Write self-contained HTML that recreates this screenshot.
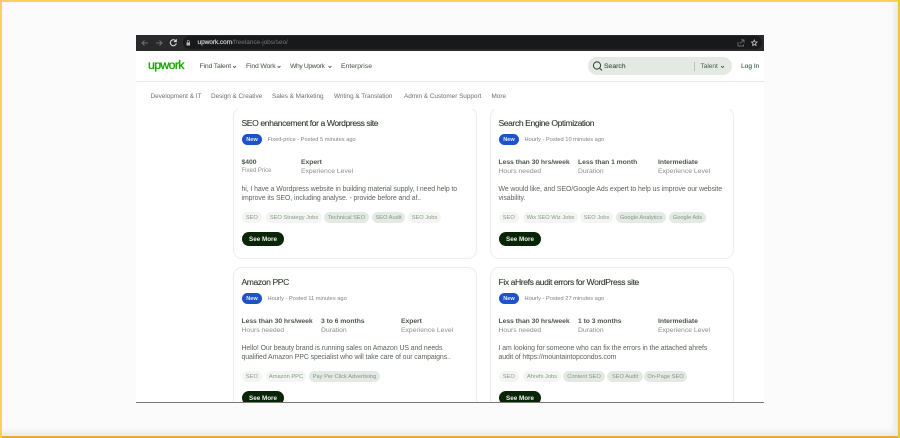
<!DOCTYPE html>
<html lang="en"><head><meta charset="utf-8"><title>Upwork</title>
<style>
html,body{margin:0;padding:0;background:#fff}
#p{position:relative;width:900px;height:438px;overflow:hidden;background:#fbfbfb;font-family:"Liberation Sans",sans-serif;box-sizing:border-box}
#sh{position:absolute;left:2px;top:2px;width:896px;height:434px;box-shadow:inset -4px -4px 6px rgba(0,0,0,.07)}
#b{position:absolute;left:0;top:0;width:900px;height:438px;filter:blur(.3px)}
#p span,#p b,#p i{position:absolute;white-space:nowrap;font-style:normal}
.fr{position:absolute;background:#f8d05a}
.t{font-size:8.6px;line-height:12px;color:#2b3a2b;letter-spacing:-.42px;-webkit-text-stroke:.1px #2b3a2b}
.nw{width:20px;height:11px;border-radius:6px;background:#1d52c9;color:#e8eeff;font-size:5.6px;line-height:12px;text-align:center;font-weight:bold}
.m{font-size:5.7px;line-height:8px;color:#7f847f}
.h{font-size:6.8px;line-height:9px;color:#4c584c;font-weight:bold;letter-spacing:-.05px}
.s{font-size:6.8px;line-height:9px;color:#8b908b}
.d{font-size:6.9px;line-height:9px;color:#5b655b;letter-spacing:-.065px}
.g,.k{height:11px;border-radius:6px;font-size:5.7px;line-height:12px;text-align:center;color:#889588}
.g{background:#f2f5f1}
.k{background:#e3eae3}
.b{width:42px;height:14px;border-radius:7px;background:#0a2408;color:#eef2ee;font-size:6.3px;line-height:15px;text-align:center;font-weight:bold}
.c{position:absolute;box-sizing:border-box;width:244px;height:160px;border:1px solid #ebeeeb;border-radius:9px;background:#fff}
.l{height:136px;border-bottom:0;border-radius:9px 9px 0 0}
.n{font-size:6.8px;line-height:10px;color:#3f4f3f}
.o{font-size:6.4px;line-height:10px;color:#6a716a;letter-spacing:-.02px}
</style></head><body>
<div id="p"><div id="sh"></div><div id="b">

<div style="position:absolute;left:136px;top:35px;width:628px;height:15.5px;background:#29292c"></div>
<div style="position:absolute;left:183px;top:36px;width:579px;height:13px;background:#18191b;border-radius:7px"></div>
<svg style="position:absolute;left:136px;top:35px" width="628" height="16" fill="none">
<path d="M12 8H6M8.500 5.500 6 8l2.500 2.500" stroke="#6c6e71" stroke-width="1"/>
<path d="M20 8h6M23.500 5.500 26 8l-2.500 2.500" stroke="#6c6e71" stroke-width="1"/>
<path d="M39.800 6a3 3 0 1 0 .5 2.300M40.300 4.300v2.300H38" stroke="#d5d7d9" stroke-width="1.100"/>
<rect x="50.500" y="7.500" width="3.500" height="3" fill="#b9bbbd"/><path d="M51.200 7.500V6.300a1 1 0 0 1 2.100 0v1.200" stroke="#b9bbbd" stroke-width=".6"/>
<path d="M602 7v4h5.500V9.500M604 8.500 607.500 5M605 4.800h3v3" stroke="#85878a" stroke-width=".7"/>
<path d="m618.300 5 .8 1.900 2 .2-1.500 1.400.4 2-1.700-1-1.700 1 .4-2-1.500-1.400 2-.2z" stroke="#c5c7c9" stroke-width=".8"/>
</svg>
<span style="left:197.500px;top:38px;font-size:6.500px;line-height:9px;color:#d8dadc;letter-spacing:-.05px;-webkit-text-stroke:.15px #d8dadc">upwork.com<span style="position:static;color:#73767a;-webkit-text-stroke:0">/freelance-jobs/seo/</span></span>

<div style="position:absolute;left:136px;top:50.500px;width:628px;height:352px;background:#fff"></div>

<!-- Card 1 -->
<div class="c" style="left:233px;top:107px;height:152px"></div>
<span class="t" style="left:241.500px;top:117px">SEO enhancement for a Wordpress site</span>
<span class="nw" style="left:242px;top:134px">New</span>
<span class="m" style="left:267.500px;top:136px">Fixed-price - Posted 5 minutes ago</span>
<span class="h" style="left:241.500px;top:158px">$400</span>
<span class="s" style="left:241.500px;top:167px;font-size:6px">Fixed Price</span>
<span class="h" style="left:301px;top:158px">Expert</span>
<span class="s" style="left:301px;top:167px">Experience Level</span>
<span class="d" style="left:241.500px;top:185px">hi, I have a Wordpress website in building material supply, I need help to</span>
<span class="d" style="left:241.500px;top:194px">improve its SEO, including analyse. - provide before and af..</span>
<span class="g" style="left:242px;top:212px;width:19.500px">SEO</span>
<span class="g" style="left:266px;top:212px;width:56px">SEO Strategy Jobs</span>
<span class="k" style="left:324px;top:212px;width:45px">Technical SEO</span>
<span class="k" style="left:372px;top:212px;width:33px">SEO Audit</span>
<span class="g" style="left:408px;top:212px;width:33px">SEO Jobs</span>
<span class="b" style="left:242px;top:231.500px">See More</span>

<!-- Card 2 -->
<div class="c" style="left:490px;top:107px;height:152px"></div>
<span class="t" style="left:498.500px;top:117px">Search Engine Optimization</span>
<span class="nw" style="left:499px;top:134px">New</span>
<span class="m" style="left:524.500px;top:136px">Hourly - Posted 10 minutes ago</span>
<span class="h" style="left:498.500px;top:158px">Less than 30 hrs/week</span>
<span class="s" style="left:498.500px;top:167px">Hours needed</span>
<span class="h" style="left:578px;top:158px">Less than 1 month</span>
<span class="s" style="left:578px;top:167px">Duration</span>
<span class="h" style="left:658px;top:158px">Intermediate</span>
<span class="s" style="left:658px;top:167px">Experience Level</span>
<span class="d" style="left:498.500px;top:185px">We would like, and SEO/Google Ads expert to help us improve our website</span>
<span class="d" style="left:498.500px;top:194px">visability.</span>
<span class="g" style="left:499px;top:212px;width:19.500px">SEO</span>
<span class="g" style="left:523px;top:212px;width:55px">Wix SEO Wiz Jobs</span>
<span class="g" style="left:580px;top:212px;width:33px">SEO Jobs</span>
<span class="k" style="left:616px;top:212px;width:50px">Google Analytics</span>
<span class="k" style="left:669px;top:212px;width:37px">Google Ads</span>
<span class="b" style="left:499px;top:231.500px">See More</span>

<!-- Card 3 -->
<div class="c l" style="left:233px;top:267px"></div>
<span class="t" style="left:241.500px;top:276px">Amazon PPC</span>
<span class="nw" style="left:242px;top:293px">New</span>
<span class="m" style="left:267.500px;top:295px">Hourly - Posted 11 minutes ago</span>
<span class="h" style="left:241.500px;top:317px">Less than 30 hrs/week</span>
<span class="s" style="left:241.500px;top:326px">Hours needed</span>
<span class="h" style="left:321px;top:317px">3 to 6 months</span>
<span class="s" style="left:321px;top:326px">Duration</span>
<span class="h" style="left:401px;top:317px">Expert</span>
<span class="s" style="left:401px;top:326px">Experience Level</span>
<span class="d" style="left:241.500px;top:344px">Hello! Our beauty brand is running sales on Amazon US and needs</span>
<span class="d" style="left:241.500px;top:353px">qualified Amazon PPC specialist who will take care of our campaigns..</span>
<span class="g" style="left:242px;top:371px;width:19.500px">SEO</span>
<span class="g" style="left:266px;top:371px;width:40px">Amazon PPC</span>
<span class="k" style="left:309px;top:371px;width:71px">Pay Per Click Advertising</span>
<span class="b" style="left:242px;top:390.500px">See More</span>

<!-- Card 4 -->
<div class="c l" style="left:490px;top:267px"></div>
<span class="t" style="left:498.500px;top:276px">Fix aHrefs audit errors for WordPress site</span>
<span class="nw" style="left:499px;top:293px">New</span>
<span class="m" style="left:524.500px;top:295px">Hourly - Posted 27 minutes ago</span>
<span class="h" style="left:498.500px;top:317px">Less than 30 hrs/week</span>
<span class="s" style="left:498.500px;top:326px">Hours needed</span>
<span class="h" style="left:578px;top:317px">1 to 3 months</span>
<span class="s" style="left:578px;top:326px">Duration</span>
<span class="h" style="left:658px;top:317px">Intermediate</span>
<span class="s" style="left:658px;top:326px">Experience Level</span>
<span class="d" style="left:498.500px;top:344px">I am looking for someone who can fix the errors in the attached ahrefs</span>
<span class="d" style="left:498.500px;top:353px">audit of https://mountaintopcondos.com</span>
<span class="g" style="left:499px;top:371px;width:19.500px">SEO</span>
<span class="g" style="left:523px;top:371px;width:38px">Ahrefs Jobs</span>
<span class="k" style="left:563px;top:371px;width:42px">Content SEO</span>
<span class="k" style="left:607px;top:371px;width:36px">SEO Audit</span>
<span class="k" style="left:644px;top:371px;width:43px">On-Page SEO</span>
<span class="b" style="left:499px;top:390.500px">See More</span>

<!-- Header overlay -->
<div style="position:absolute;left:136px;top:50.500px;width:628px;height:58.500px;background:#fff"></div>
<div style="position:absolute;left:136px;top:81px;width:628px;height:1px;background:#e6e8e6"></div>

<span style="left:148px;top:58px;font-size:12.400px;line-height:15px;color:#14a800;letter-spacing:-.7px;-webkit-text-stroke:.35px #14a800">upwork</span>
<span class="n" style="left:199.500px;top:62px;letter-spacing:-.15px">Find Talent</span>
<span class="n" style="left:246px;top:62px;letter-spacing:-.15px">Find Work</span>
<span class="n" style="left:290px;top:62px;letter-spacing:-.4px">Why Upwork</span>
<span class="n" style="left:341px;top:62px">Enterprise</span>
<svg style="position:absolute;left:232px;top:64.500px" width="110" height="5" fill="none" stroke="#3f4f3f" stroke-width=".8">
<path d="M1 1 2.500 2.500 4 1M45.500 1 47 2.500 48.500 1M96.500 1 98 2.500 99.500 1"/>
</svg>

<div style="position:absolute;left:588px;top:57px;width:144px;height:18px;border-radius:9px;background:#e3eae2"></div>
<svg style="position:absolute;left:592px;top:60px" width="12" height="12" fill="none" stroke="#2f3f2f" stroke-width="1"><circle cx="5" cy="5.500" r="3.600"/><path d="m7.700 8.200 2.300 2.300"/></svg>
<span class="n" style="left:604px;top:62px;color:#4a5a4a;font-size:6.800px;-webkit-text-stroke:.15px #4a5a4a">Search</span>
<div style="position:absolute;left:693.500px;top:61.500px;width:1px;height:9px;background:#b9c4b9"></div>
<span class="n" style="left:700.500px;top:62px;color:#4a5a4a;font-size:6.500px">Talent</span>
<svg style="position:absolute;left:719.500px;top:64.500px" width="6" height="5" fill="none" stroke="#3f4f3f" stroke-width=".8"><path d="M1 1 2.500 2.500 4 1"/></svg>
<span class="n" style="left:741px;top:62px;color:#3a5a3a;font-size:6.600px;-webkit-text-stroke:.1px #3a5a3a">Log In</span>

<span class="o" style="left:150.500px;top:92px">Development &amp; IT</span>
<span class="o" style="left:211px;top:92px">Design &amp; Creative</span>
<span class="o" style="left:272px;top:92px">Sales &amp; Marketing</span>
<span class="o" style="left:334px;top:92px">Writing &amp; Translation</span>
<span class="o" style="left:404px;top:92px">Admin &amp; Customer Support</span>
<span class="o" style="left:491.500px;top:92px">More</span>

<div style="position:absolute;left:136px;top:402.500px;width:628px;height:8px;background:#fbfbfb"></div>
<div style="position:absolute;left:136px;top:402px;width:628px;height:1px;background:#787878"></div>
</div>
<div class="fr" style="left:0;top:0;width:900px;height:2px"></div>
<div class="fr" style="left:0;top:436px;width:900px;height:2px;background:#e2ae35"></div>
<div class="fr" style="left:0;top:0;width:2px;height:438px"></div>
<div class="fr" style="left:898px;top:0;width:2px;height:438px;background:#f0c040"></div>
</div>
</body></html>
